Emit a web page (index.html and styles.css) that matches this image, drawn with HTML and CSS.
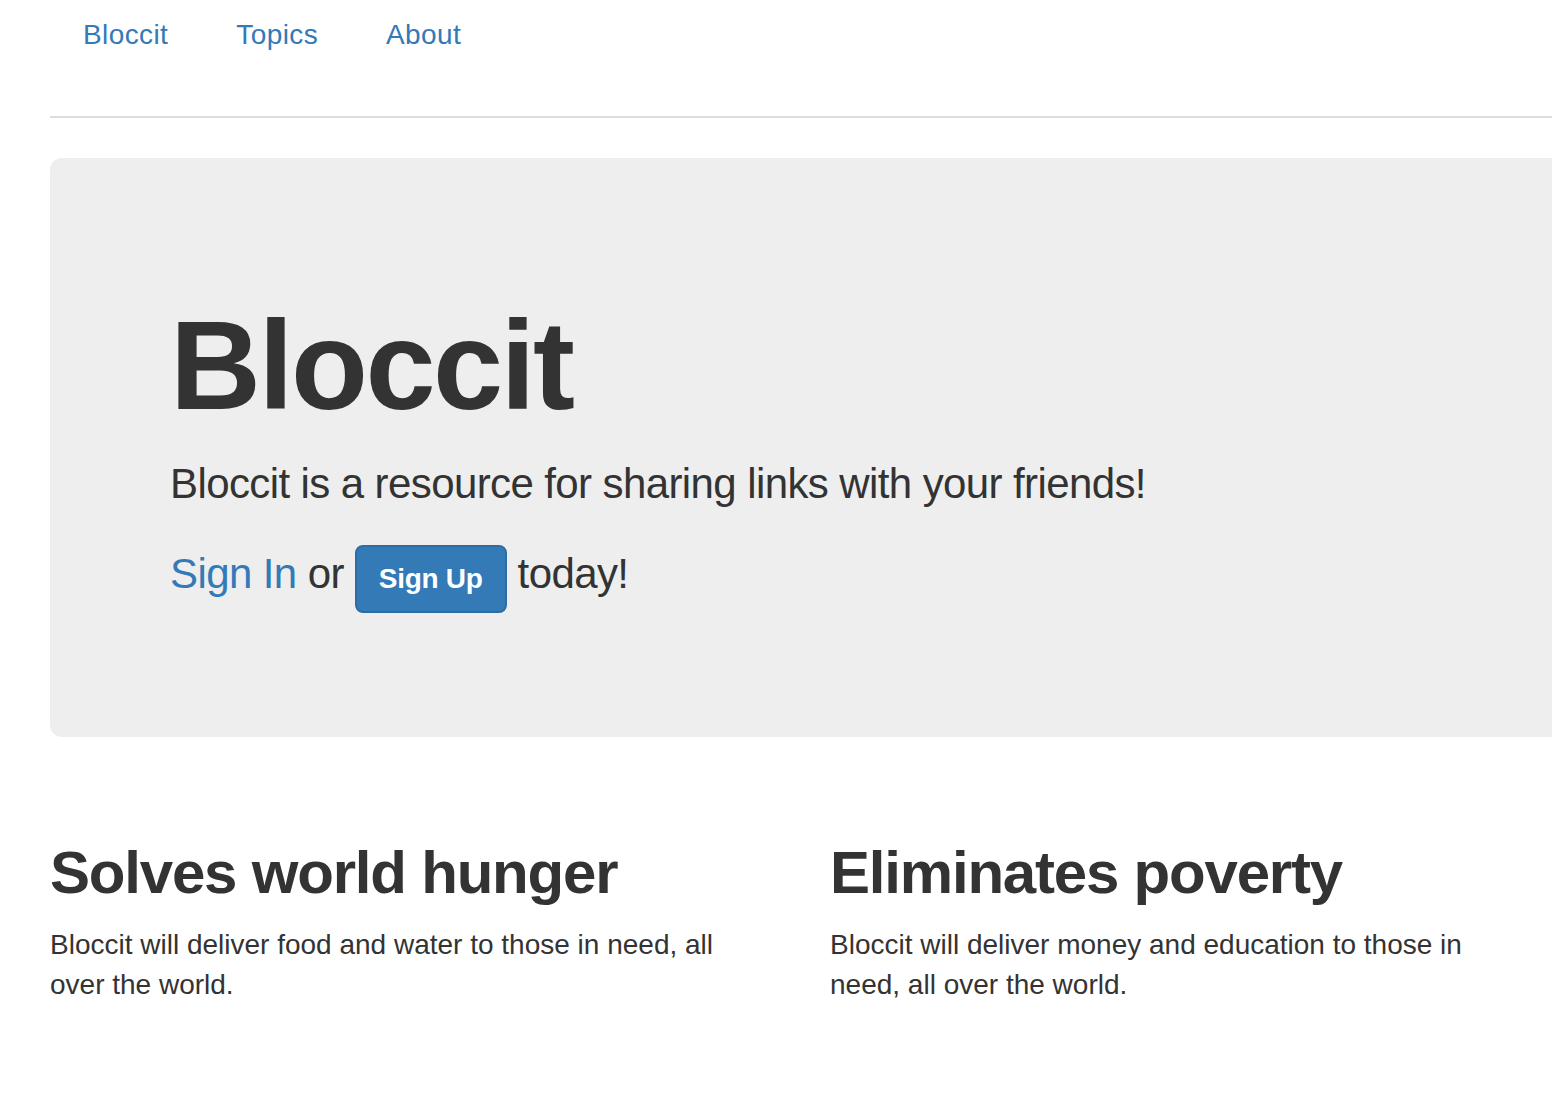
FILE: index.html
```html
<!DOCTYPE html>
<html lang="en">
<head>
<meta charset="utf-8">
<title>Bloccit</title>
<link rel="stylesheet" href="styles.css">
</head>
<body>
<div class="container">
  <ul class="nav">
    <li><a href="#">Bloccit</a></li>
    <li><a href="#">Topics</a></li>
    <li><a href="#">About</a></li>
  </ul>
  <hr class="rule">
  <div class="jumbotron">
    <h1 class="jumbo-title">Bloccit</h1>
    <p class="lead">Bloccit is a resource for sharing links with your friends!</p>
    <p class="lead cta"><a href="#" class="signin">Sign In</a> or <a href="#" class="btn">Sign Up</a> today!</p>
  </div>
  <div class="row">
    <div class="col">
      <h2 class="feature">Solves world hunger</h2>
      <p class="desc">Bloccit will deliver food and water to those in need, all over the world.</p>
    </div>
    <div class="col">
      <h2 class="feature">Eliminates poverty</h2>
      <p class="desc">Bloccit will deliver money and education to those in need, all over the world.</p>
    </div>
  </div>
</div>
</body>
</html>
```

FILE: styles.css
```css
html, body {
  margin: 0;
  padding: 0;
  overflow: hidden;
  background: #fff;
}
body {
  font-family: "Liberation Sans", Arial, sans-serif;
  color: #333;
  font-size: 28px;
  line-height: 40px;
}
a {
  color: #337ab7;
  text-decoration: none;
}
.container {
  margin-left: 50px;
  width: 1600px;
}
.nav {
  list-style: none;
  margin: 0;
  padding: 0 0 0 1px;
  display: flex;
  gap: 4px;
}
.nav a {
  display: block;
  padding: 15px 32px 18px;
  font-size: 28px;
  line-height: 40px;
  letter-spacing: 0.4px;
}
.rule {
  margin: 43px 0 0;
  border: 0;
  border-top: 2px solid #dddddd;
  height: 0;
}
.jumbotron {
  margin-top: 40px;
  background: #eeeeee;
  border-radius: 12px;
  padding: 96px 120px 94px;
}
.jumbo-title {
  margin: 43px 0 19px;
  font-size: 126px;
  line-height: 138px;
  font-weight: 700;
  letter-spacing: -2.5px;
  color: #333;
}
.lead {
  margin: 0 0 30px;
  font-size: 42px;
  line-height: 60px;
  font-weight: 400;
  letter-spacing: -0.6px;
}
.cta {
  margin-top: 30px;
}
.btn {
  display: inline-block;
  background: #337ab7;
  border: 2px solid #2e6da4;
  border-radius: 8px;
  color: #fff;
  font-size: 28px;
  line-height: 40px;
  font-weight: 700;
  padding: 12px 22px;
  letter-spacing: -0.3px;
}
.row {
  display: flex;
  margin: 0 -30px;
}
.col {
  width: 780px;
  padding: 0 30px;
  box-sizing: border-box;
}
.feature {
  margin: 103px 0 19px;
  font-size: 60px;
  line-height: 66px;
  font-weight: 700;
  letter-spacing: -1.2px;
}
.desc {
  margin: 0;
  padding-right: 30px;
  font-size: 28px;
  line-height: 40px;
}
```
